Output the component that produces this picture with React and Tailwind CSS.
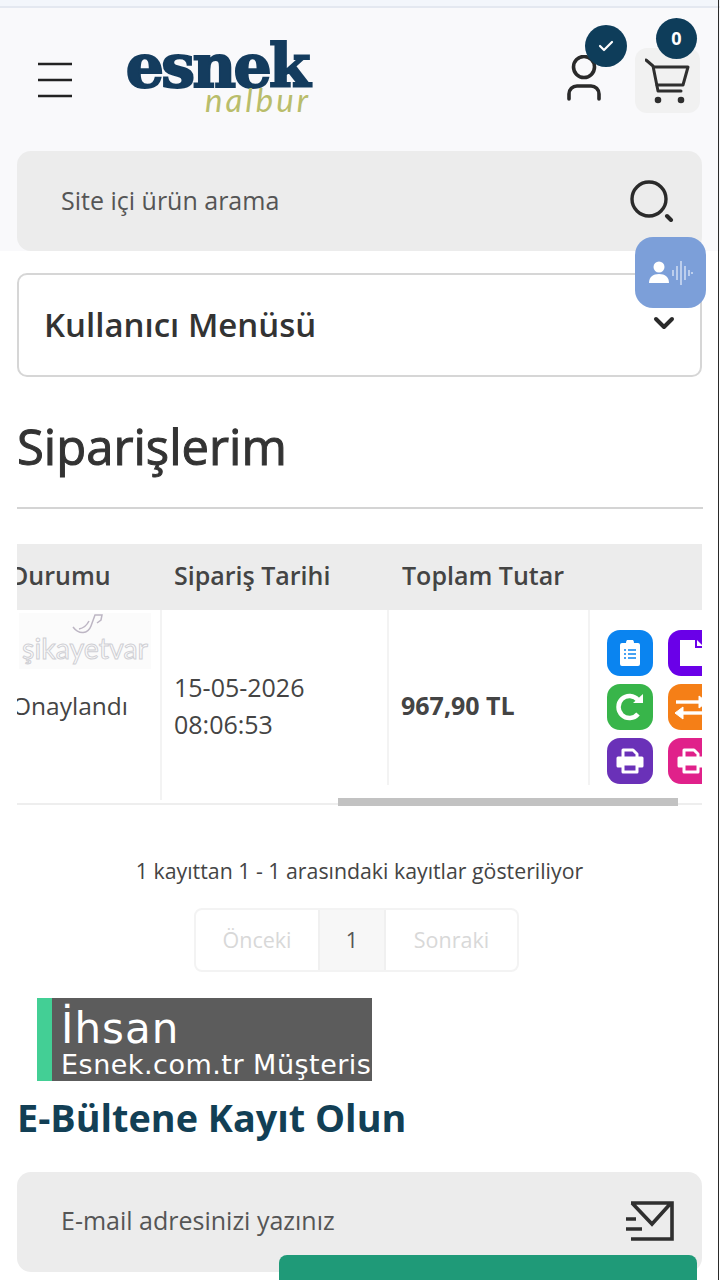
import React from "react";

const openSans = { fontFamily: '"Open Sans", "Noto Sans", sans-serif' };

function ActionBtn({ color, children }) {
  return (
    <div className={`w-[46px] h-[46px] rounded-[13px] shrink-0 flex items-center justify-center ${color}`}>
      {children}
    </div>
  );
}

const Printer = () => (
  <svg width="32" height="32" viewBox="0 0 32 32" fill="none" stroke="#fff" strokeWidth="3" strokeLinejoin="round">
    <path d="M9 13V5h10l4 4v4" />
    <path d="M9 21H4v-8h24v8h-5" fill="#fff" />
    <rect x="9" y="19" width="14" height="8" fill="currentColor" stroke="#fff" />
  </svg>
);

export default function App() {
  return (
    <div className="relative w-[720px] h-[1280px] overflow-hidden bg-white" style={openSans}>
      <div className="h-[8px] bg-[#f3f6fb] border-b-2 border-[#e4e8f0]" />

      <div className="bg-[#f9f9fb] h-[243px]">
        <header className="h-[143px] flex items-start">
          <svg className="ml-[38px] mt-[54px]" width="34" height="36" viewBox="0 0 34 36" stroke="#222" strokeWidth="2.4">
            <path d="M0 2h34M0 18h34M0 34h34" />
          </svg>
          <div className="ml-[46px] mt-[35px] w-[190px] flex flex-col items-end">
            <div className="text-[#143c5e] text-[60px] leading-[46px] font-black tracking-[-2.6px] [-webkit-text-stroke:2px_#143c5e]" style={{ fontFamily: '"DejaVu Serif", serif' }}>
              esnek
            </div>
            <div className="text-[#b9bd6b] text-[33px] leading-[20px] italic tracking-[3px] -mr-[3px]" style={{ fontFamily: 'Lato, sans-serif' }}>
              nalbur
            </div>
          </div>
          <div className="ml-auto mr-[25px] relative w-[110px] h-full">
            <svg className="absolute left-[-18px] top-[47px]" width="36" height="46" viewBox="0 0 36 46" fill="none" stroke="#2a2a2a" strokeWidth="3.6" strokeLinecap="round">
              <circle cx="17" cy="12" r="10.5" />
              <path d="M2 44v-5a8 8 0 0 1 8-8h14a8 8 0 0 1 8 8v5" />
            </svg>
            <div className="absolute left-[50px] top-[40px] w-[65px] h-[65px] rounded-[12px] bg-[#f1f1f1] flex items-center justify-center">
              <svg width="46" height="46" viewBox="0 0 46 46" fill="none" stroke="#2f2f2f" strokeWidth="3" strokeLinecap="round" strokeLinejoin="round">
                <path d="M1 2l7 6 5 25h23" />
                <path d="M9 9h34l-5 18H12" />
                <circle cx="13" cy="42" r="1.8" fill="#2f2f2f" />
                <circle cx="36" cy="42" r="1.8" fill="#2f2f2f" />
              </svg>
            </div>
            <div className="absolute left-0 top-[17px] w-[42px] h-[42px] rounded-full bg-[#0e3d5a] flex items-center justify-center">
              <svg width="16" height="14" viewBox="0 0 16 14" fill="none" stroke="#fff" strokeWidth="2.2" strokeLinecap="round" strokeLinejoin="round">
                <path d="M2 7l4 4 8-8" />
              </svg>
            </div>
            <div className="absolute left-[71px] top-[10px] w-[41px] h-[41px] rounded-full bg-[#0e3d5a] flex items-center justify-center text-white text-[18px] font-bold">
              0
            </div>
          </div>
        </header>

        <div className="mx-[17px] w-[685px] h-[100px] rounded-[14px] bg-[#ececec] flex items-center pl-[44px] pr-[28px] justify-between">
          <span className="text-[#555] text-[25px]">Site içi ürün arama</span>
          <svg width="44" height="42" viewBox="0 0 44 42" fill="none" stroke="#2a2a2a" strokeWidth="3.4" strokeLinecap="round">
            <circle cx="19" cy="19" r="17" />
            <path d="M37 36l4 4" strokeWidth="4" />
          </svg>
        </div>
      </div>

      <div className="mx-[17px] mt-[22px] w-[685px] h-[104px] border-2 border-[#d6d6d6] rounded-[10px] flex items-center pl-[25px] relative">
        <span className="text-[#333] text-[33px] font-semibold">Kullanıcı Menüsü</span>
        <svg className="absolute right-[25px] top-[41px]" width="22" height="14" viewBox="0 0 22 14" fill="none" stroke="#2a2a2a" strokeWidth="4" strokeLinecap="round" strokeLinejoin="round">
          <path d="M3 3l8 8 8-8" />
        </svg>
      </div>

      <h1 className="ml-[17px] mt-[37px] text-[#333] text-[49px] leading-[64px] [-webkit-text-stroke:1px_#333]">Siparişlerim</h1>
      <div className="mx-[17px] mt-[29px] h-[2px] bg-[#d4d4d4]" />

      <div className="relative mx-[17px] mt-[35px] w-[685px] h-[262px] overflow-hidden">
        <div className="h-[66px] bg-[#ececec]" />
        <div className="absolute inset-x-0 top-0 h-[66px] pb-[3px] flex items-center text-[#444] text-[25px] font-semibold">
          <span className="-ml-[7px] w-[164px] shrink-0">Durumu</span>
          <span className="w-[228px] shrink-0">Sipariş Tarihi</span>
          <span className="shrink-0">Toplam Tutar</span>
        </div>

        <div className="flex h-[190px] text-[#444] text-[25px]">
          <div className="w-[145px] shrink-0 border-r-2 border-[#f3f3f3] relative">
            <div className="h-[56px] ml-[2px] mt-[3px] bg-[#fbfbfb] w-[132px] flex flex-col items-center overflow-hidden">
              <svg className="ml-[6px] shrink-0" width="34" height="22" viewBox="0 0 34 22" fill="none" stroke="#bdb6c4" strokeWidth="1.5">
                <path d="M2 14c6 8 15 7 18-1l4-11h7l-1 5-4 3" />
                <path d="M8 16c5-1 8-4 10-8" />
              </svg>
              <span className="text-transparent text-[28.5px] leading-[30px] -mt-[2px] [-webkit-text-stroke:1px_#cfcfd4]" style={{ fontFamily: 'Lato, sans-serif' }}>şikayetvar</span>
            </div>
            <span className="absolute -left-[5px] top-[79px] text-[24.5px] leading-[34px]">Onaylandı</span>
          </div>
          <div className="w-[227px] h-[175px] shrink-0 border-r-2 border-[#f3f3f3] pl-[12px] pt-[17px] flex flex-col justify-center leading-[37px]">
            <span>15-05-2026</span>
            <span>08:06:53</span>
          </div>
          <div className="w-[201px] h-[175px] shrink-0 border-r-2 border-[#f3f3f3] pl-[12px] pt-[17px] flex items-center font-bold text-[25px]">
            967,90 TL
          </div>
          <div className="pl-[17px] pt-[20px] grid grid-cols-[46px_46px] content-start gap-x-[15px] gap-y-[8px]">
            <ActionBtn color="bg-[#0a84f0]">
              <svg width="22" height="26" viewBox="0 0 22 26" fill="#fff">
                <path d="M3 3h4a4 4 0 0 1 8 0h4a2 2 0 0 1 2 2v19a2 2 0 0 1-2 2H3a2 2 0 0 1-2-2V5a2 2 0 0 1 2-2z" />
                <path d="M5 10h2M9 10h8M5 14h2M9 14h8M5 18h2M9 18h8" stroke="#0a84f0" strokeWidth="1.6" />
              </svg>
            </ActionBtn>
            <ActionBtn color="bg-[#6a00e8]">
              <svg width="24" height="26" viewBox="0 0 24 26" fill="#fff">
                <path d="M1 0h15v8h8v18H1z" />
                <path d="M18 0l6 6h-6z" />
              </svg>
            </ActionBtn>
            <ActionBtn color="bg-[#38b54a]">
              <svg width="30" height="30" viewBox="0 0 30 30" fill="none" stroke="#fff" strokeWidth="4.5">
                <path d="M23 22a11 11 0 1 1 0-14" />
                <path d="M18 11h10V2z" fill="#fff" stroke="none" />
              </svg>
            </ActionBtn>
            <ActionBtn color="bg-[#f57f17]">
              <svg width="34" height="28" viewBox="0 0 34 28" fill="#fff" stroke="#fff">
                <path d="M2 9h24" strokeWidth="3.4" />
                <path d="M25 3l8 6-8 6z" />
                <path d="M8 20h24" strokeWidth="3.4" />
                <path d="M9 14l-8 6 8 6z" />
              </svg>
            </ActionBtn>
            <ActionBtn color="bg-[#6a31b8] text-[#6a31b8]"><Printer /></ActionBtn>
            <ActionBtn color="bg-[#e0218a] text-[#e0218a]"><Printer /></ActionBtn>
          </div>
        </div>
        <div className="absolute left-0 right-0 top-[259px] h-[2px] bg-[#eeeeee]" />
        <div className="absolute left-[321px] top-[254px] w-[340px] h-[8px] bg-[#c2c2c2]" />
      </div>

      <p className="mt-[50px] text-center text-[#444] text-[21.3px] leading-[30px] pr-[1px]">1 kayıttan 1 - 1 arasındaki kayıtlar gösteriliyor</p>

      <div className="ml-[194px] mt-[22px] w-[325px] h-[64px] border-2 border-[#f3f3f3] rounded-[8px] flex text-[21.5px] items-stretch">
        <div className="w-[122px] flex items-center justify-center text-[#d8d8d8]">Önceki</div>
        <div className="w-[68px] flex items-center justify-center text-[#555] bg-[#f7f7f7] border-x-2 border-[#f0f0f0]">1</div>
        <div className="flex-1 flex items-center justify-center text-[#d8d8d8]">Sonraki</div>
      </div>

      <h2 className="ml-[17px] mt-[122px] text-[#123f55] text-[37.8px] leading-[48px] font-bold">E-Bültene Kayıt Olun</h2>

      <div className="mx-[17px] mt-[30px] w-[685px] h-[100px] rounded-[14px] bg-[#ececec] flex items-center pl-[44px] pr-[28px] justify-between">
        <span className="text-[#555] text-[25px] -mt-[2px]">E-mail adresinizi yazınız</span>
        <svg className="-mt-[2px]" width="48" height="40" viewBox="0 0 48 40" fill="none" stroke="#2f2f2f" strokeWidth="3.6">
          <path d="M5 2h41v36H5M6 2l20 21L45 2" />
          <path d="M0 18h10M0 28h16" />
        </svg>
      </div>

      <div className="absolute left-[279px] top-[1255px] w-[418px] h-[40px] rounded-t-[8px] bg-[#1f9a78]" />

      <div className="absolute left-[635px] top-[237px] w-[71px] h-[71px] rounded-[18px] bg-[#7c9fd9] flex items-center justify-center">
        <svg width="44" height="26" viewBox="0 0 44 26" fill="#fff">
          <circle cx="10" cy="7" r="5.5" />
          <path d="M0 23c0-6 4-9 10-9s10 3 10 9z" />
          <path d="M24 10v6M28 6v14M32 1v24M36 6v14M40 10v6M43 12v2" stroke="#dfe8f7" strokeWidth="1.3" fill="none" />
        </svg>
      </div>

      <div className="absolute left-[37px] top-[998px] w-[335px] h-[83px] bg-[#5c5c5c] overflow-hidden flex" style={{ fontFamily: '"DejaVu Sans", sans-serif' }}>
        <div className="w-[15px] bg-[#43cf95] shrink-0" />
        <div className="pl-[9px] text-white whitespace-nowrap">
          <div className="text-[42px] leading-[50px] mt-[6px] tracking-[1px]">İhsan</div>
          <div className="text-[27px] leading-[29px] -mt-[4px] tracking-[0.5px]">Esnek.com.tr Müşterisi</div>
        </div>
      </div>

      <div className="absolute left-[718px] top-0 w-[1px] h-full bg-[#2a2a2a]" />
    </div>
  );
}
